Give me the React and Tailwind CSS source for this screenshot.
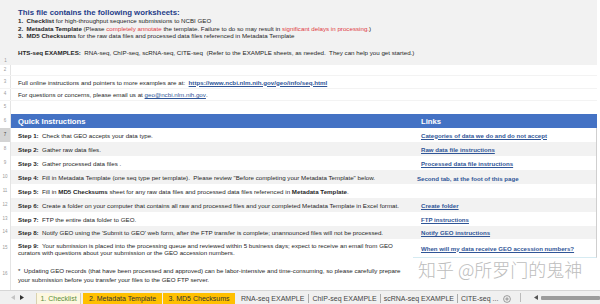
const steps = [
  { n: 7, h: 'h-[14px]', bg: 'bg-white', sel: true, label: 'Step 1:', text: <>  Check that GEO accepts your data type.</>, link: 'Categories of data we do and do not accept' },
  { n: 8, h: 'h-[14px]', bg: 'bg-[#f2f2f2]', label: 'Step 2:', text: <>  Gather raw data files.</>, link: 'Raw data file instructions' },
  { n: 9, h: 'h-[14px]', bg: 'bg-white', label: 'Step 3:', text: <>  Gather processed data files .</>, link: 'Processed data file instructions' },
  { n: 10, h: 'h-[14px]', bg: 'bg-[#f2f2f2]', label: 'Step 4:', text: <>  Fill in Metadata Template (one seq type per template).  Please review "Before completing your Metadata Template" below.</>, plain: 'Second tab, at the foot of this page' },
  { n: 11, h: 'h-[14px]', bg: 'bg-white', label: 'Step 5:', text: <>  Fill in <b>MD5 Checksums</b> sheet for any raw data files and processed data files referenced in <b>Metadata Template</b>.</> },
  { n: 12, h: 'h-[14px]', bg: 'bg-[#f2f2f2]', label: 'Step 6:', text: <>  Create a folder on your computer that contains all raw and processed files and your completed Metadata Template in Excel format.</>, link: 'Create folder' },
  { n: 13, h: 'h-[14px]', bg: 'bg-white', label: 'Step 7:', text: <>  FTP the entire data folder to GEO.</>, link: 'FTP instructions' },
  { n: 14, h: 'h-[13px]', bg: 'bg-[#f2f2f2]', label: 'Step 8:', text: <>  Notify GEO using the 'Submit to GEO' web form, after the FTP transfer is complete; unannounced files will not be processed.</>, link: 'Notify GEO instructions' },
  { n: 15, h: 'h-[19px]', bg: 'bg-white', label: 'Step 9:', text: <>  Your submission is placed into the processing queue and reviewed within 5 business days; expect to receive an email from GEO<br />curators with questions about your submission or the GEO accession numbers.</>, link: 'When will my data receive GEO accession numbers?', last: true },
];

function Gutter({ n, sel, extra }) {
  return (
    <div className={`w-[11px] shrink-0 flex items-center justify-center text-[4.5px] leading-none border-r border-[#e4e4e4] ${sel ? 'bg-[#d4d4d4] text-[#444]' : 'text-[#9a9a9a]'} ${extra || ''}`}>
      {n}
    </div>
  );
}

function Tri({ dir, color }) {
  return (
    <svg width="4" height="5" viewBox="0 0 4 5">
      {dir === 'l' ? <path d="M4 0 L0 2.5 L4 5 Z" fill={color} /> : <path d="M0 0 L4 2.5 L0 5 Z" fill={color} />}
    </svg>
  );
}

export default function App() {
  return (
    <div className="relative w-[600px] h-[304px] overflow-hidden bg-white font-['Liberation_Sans',Arial,sans-serif] text-[#262626]">
      <div className="flex flex-col h-[290px]">
        {/* Row 1: gray info block */}
        <div className="flex h-[65px] w-[597px] bg-[#f2f2f2]">
          <div className="w-[11px] shrink-0 flex items-end justify-center pb-[2px] text-[4.5px] leading-none text-[#9a9a9a]">1</div>
          <div className="flex flex-col pl-[7px] pt-[8px]">
            <div className="text-[7.8px] leading-[9px] font-bold text-[#1f3c88] whitespace-pre">This file contains the following worksheets:</div>
            <div className="text-[6.2px] leading-[7.6px] whitespace-pre">
              <div><b>1.  Checklist</b> for high-throughput sequence submissions to NCBI GEO</div>
              <div><b>2.  Metadata Template</b> (Please <span className="text-[#e0393e]">completely annotate</span> the template. Failure to do so may result in <span className="text-[#e0393e]">significant delays in processing.</span>)</div>
              <div><b>3.  MD5 Checksums</b> for the raw data files and processed data files referenced in Metadata Template</div>
            </div>
            <div className="mt-[9px] text-[6.2px] leading-[7.6px] whitespace-pre"><b>HTS-seq EXAMPLES:</b>  RNA-seq, ChIP-seq, scRNA-seq, CITE-seq  (Refer to the EXAMPLE sheets, as needed.  They can help you get started.)</div>
          </div>
        </div>

        {/* Row 2 */}
        <div className="flex h-[11px] w-[597px] border-b border-[#f3f3f3]">
          <Gutter n={2} />
        </div>
        {/* Row 3 */}
        <div className="flex h-[13px] w-[597px] border-b border-[#f3f3f3]">
          <Gutter n={3} />
          <div className="flex items-center pl-[7px] text-[6.2px] leading-[7px] whitespace-pre">
            Full online instructions and pointers to more examples are at:  <span className="font-bold text-[#2f5597] underline">https://www.ncbi.nlm.nih.gov/geo/info/seq.html</span>
          </div>
        </div>
        {/* Row 4 */}
        <div className="flex h-[12px] w-[597px] border-b border-[#f3f3f3]">
          <Gutter n={4} />
          <div className="flex items-center pl-[7px] text-[6.2px] leading-[7px] whitespace-pre">
            For questions or concerns, please email us at <span className="text-[#2f5597] underline">geo@ncbi.nlm.nih.gov</span>.
          </div>
        </div>
        {/* Row 5 */}
        <div className="flex h-[13px] w-[597px]">
          <Gutter n={5} />
        </div>
        {/* Row 6: header */}
        <div className="flex h-[14px] w-[597px]">
          <Gutter n={6} />
          <div className="flex flex-1 bg-[#4472c4] text-white font-bold text-[7.7px] leading-[9px]">
            <div className="w-[402px] flex items-center pl-[7px]">Quick Instructions</div>
            <div className="flex-1 flex items-center pl-[8px]">Links</div>
          </div>
        </div>
        {/* Steps */}
        {steps.map((s) => (
          <div key={s.n} className={`flex ${s.h} w-[597px]`}>
            <Gutter n={s.n} sel={s.sel} />
            <div className={`flex flex-1 ${s.bg}`}>
              <div className="w-[402px] flex items-center pl-[7px] text-[6.2px] leading-[7px] whitespace-pre">
                <div><b>{s.label}</b>{s.text}</div>
              </div>
              <div className={`flex-1 flex items-center border-r border-[#cfcfcf] text-[6.1px] leading-[7px] font-bold text-[#2f5597] whitespace-pre ${s.last ? 'border-b border-b-[#d6ebf2]' : ''} ${s.plain ? 'pl-[4px] pt-[2px]' : 'pl-[8px]'}`}>
                {s.link && <span className="underline">{s.link}</span>}
                {s.plain && <span>{s.plain}</span>}
              </div>
            </div>
          </div>
        ))}
        {/* Row 16: note */}
        <div className="flex flex-1 w-[597px]">
          <Gutter n={16} />
          <div className="flex-1 pl-[7px] pt-[8px] text-[6.2px] leading-[9px] whitespace-pre">
            *  Updating GEO records (that have been processed and approved) can be labor-intensive and time-consuming, so please carefully prepare<br />your submission before you transfer your files to the GEO FTP server.
          </div>
        </div>
      </div>

      {/* Sheet tabs */}
      <div className="flex h-[14px] bg-[#f0f0f0] border-t border-[#d6d6d6] text-[7px] leading-none text-[#444]">
        <div className="w-[36px] shrink-0 flex items-center gap-[5px] pl-[11px]">
          <Tri dir="l" color="#c4c4c4" />
          <Tri dir="r" color="#333" />
        </div>
        <div className="flex items-end h-full">
          <div className="w-[45px] h-[11px] flex items-center justify-center bg-[#fdf7df] text-[#5b8f3b] border-x border-[#d9d2b0]">1. Checklist</div>
          <div className="w-[2px]" />
          <div className="w-[79px] h-[11px] flex items-center justify-center bg-[#ffc000] text-[#333]">2. Metadata Template</div>
          <div className="w-[1px]" />
          <div className="w-[72px] h-[11px] flex items-center justify-center bg-[#ffc000] text-[#333]">3. MD5 Checksums</div>
          <div className="h-[11px] flex items-center pl-[6px] pr-[4px] whitespace-pre">RNA-seq EXAMPLE</div>
          <div className="w-px h-[9px] mb-[1px] bg-[#aaaaaa]" />
          <div className="h-[11px] flex items-center px-[3px] whitespace-pre">ChIP-seq EXAMPLE</div>
          <div className="w-px h-[9px] mb-[1px] bg-[#aaaaaa]" />
          <div className="h-[11px] flex items-center px-[3px] whitespace-pre">scRNA-seq EXAMPLE</div>
          <div className="w-px h-[9px] mb-[1px] bg-[#aaaaaa]" />
          <div className="h-[11px] flex items-center pl-[3px] pr-[5px] whitespace-pre">CITE-seq ...</div>
          <div className="h-[11px] flex items-center">
            <svg width="8" height="8" viewBox="0 0 8 8">
              <circle cx="4" cy="4" r="3.4" fill="none" stroke="#777" strokeWidth="0.7" />
              <path d="M4 2.2 V5.8 M2.2 4 H5.8" stroke="#777" strokeWidth="0.7" />
            </svg>
          </div>
        </div>
        <div className="flex-1 flex items-center pl-[9px] gap-[3px]">
          <div className="w-px h-[9px] bg-[#bbbbbb]" />
          <div className="ml-[10px]"><Tri dir="l" color="#555" /></div>
          <div className="flex-1 h-[4px] rounded-[1px] bg-[#9c9c9c]" />
        </div>
      </div>

      {/* watermark */}
      <div className="absolute left-[418px] top-[258px] text-[18px] leading-[22px] font-light text-[#bdbdbd] whitespace-pre font-['Noto_Sans_CJK_SC',sans-serif]">
        知乎 @所罗门的鬼神
      </div>
    </div>
  );
}
